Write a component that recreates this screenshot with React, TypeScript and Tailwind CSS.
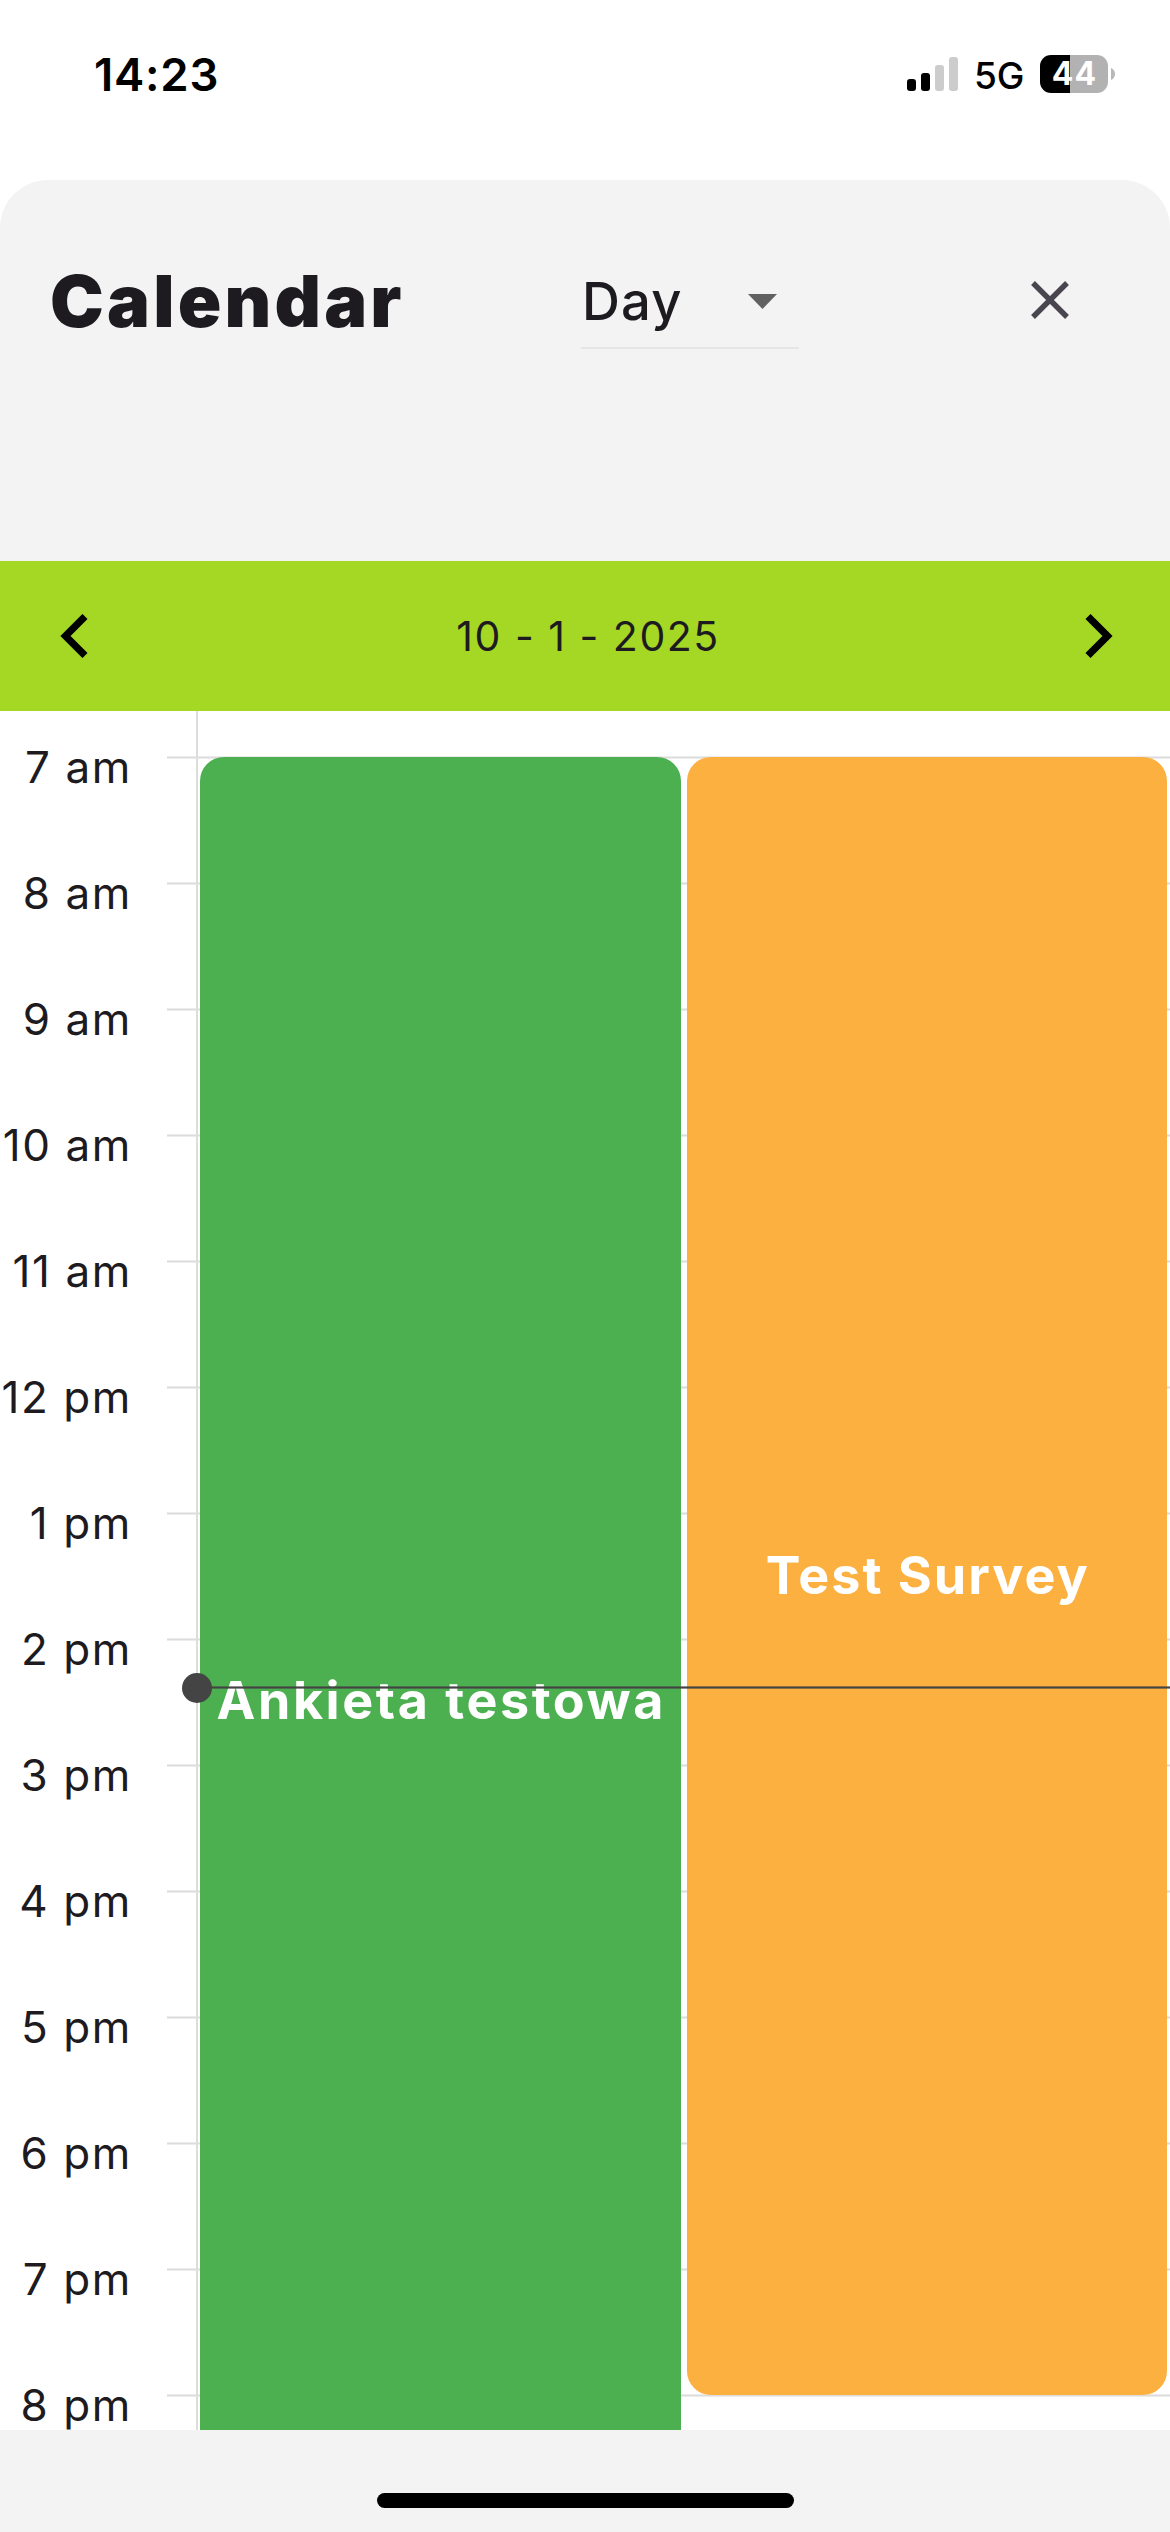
import React from "react";

const hours = [
  "7 am", "8 am", "9 am", "10 am", "11 am", "12 pm", "1 pm",
  "2 pm", "3 pm", "4 pm", "5 pm", "6 pm", "7 pm", "8 pm",
];

function StatusBar() {
  return (
    <div className="flex h-[180px] shrink-0 items-start justify-between pl-[94px] pr-[55px] text-black">
      <div className="mt-[50px] h-[49px] text-[45.5px] font-semibold leading-[49px] tracking-[0.75px]">14:23</div>
      <div className="mt-[55px] flex h-[38px] items-center">
        <div className="flex h-[34px] items-end gap-[5px]">
          <div className="h-3 w-[9px] rounded-[3px] bg-black" />
          <div className="h-[18px] w-[9px] rounded-[3px] bg-black" />
          <div className="h-[26px] w-[9px] rounded-[3px] bg-[#cccccc]" />
          <div className="h-[34px] w-[9px] rounded-[3px] bg-[#cccccc]" />
        </div>
        <div className="ml-4 mt-1 w-[66px] text-[37px] font-medium leading-[38px]">5G</div>
        <div className="flex h-[38px] w-[68px] items-center justify-center rounded-[11px] bg-[linear-gradient(to_right,#000_30px,#b2b2b2_30px)] pl-px text-[32px] font-bold leading-[38px] tracking-[1px] text-white">
          44
        </div>
        <svg className="ml-[3px]" width="4" height="12" viewBox="0 0 4 12">
          <path d="M0 0C2.4 1 4 3.3 4 6S2.4 11 0 12Z" fill="#b8b8b8" />
        </svg>
      </div>
    </div>
  );
}

function Header() {
  return (
    <header className="flex h-[381px] shrink-0 items-start rounded-t-[48px] bg-[#f3f3f3] pl-[50px] text-[#1d1b20]">
      <h1 className="mt-[81px] w-[531px] text-[72px] font-black leading-[80px] tracking-[3.2px]">Calendar</h1>
      <div className="mt-[75px] flex h-[94px] w-[218px] items-center justify-between border-b-[2px] border-[#e5e5e5] pl-px pr-[22px]">
        <span className="text-[52.5px] font-medium leading-[92px] tracking-[1.2px]">Day</span>
        <svg width="29" height="15" viewBox="0 0 29 15">
          <path d="M0 0H29L14.5 15Z" fill="#616161" />
        </svg>
      </div>
      <svg className="ml-[232px] mt-[101px]" width="38" height="38" viewBox="0 0 38 38">
        <path d="M2 2L36 36M36 2L2 36" stroke="#49454f" strokeWidth="5.4" fill="none" />
      </svg>
    </header>
  );
}

function DateBar() {
  return (
    <div className="flex h-[150px] shrink-0 items-center justify-between bg-[#a5d824] pl-[60px] pr-[57px]">
      <svg width="28" height="44" viewBox="0 0 28 44">
        <path d="M25 2.5L5.5 22L25 41.5" stroke="#000" strokeWidth="7.2" fill="none" />
      </svg>
      <div className="pl-[3px] text-[41px] leading-[50px] tracking-[1.5px] text-[#1d1b20]">10 - 1 - 2025</div>
      <svg width="28" height="44" viewBox="0 0 28 44">
        <path d="M3 2.5L22.5 22L3 41.5" stroke="#000" strokeWidth="7.2" fill="none" />
      </svg>
    </div>
  );
}

function Timeline() {
  return (
    <main className="relative h-[1719px] shrink-0 overflow-hidden bg-white pt-[45px]">
      {hours.map((h) => (
        <div key={h} className="flex h-[126px] items-start text-[#1d1b20]">
          <div className="-mt-[14px] w-[132px] shrink-0 whitespace-nowrap text-right text-[44px] leading-[50px] tracking-[1.6px]">
            {h}
          </div>
          <div className="ml-[35px] h-[3px] flex-1 border-y border-[#ececec] bg-[#dcdcdc]" />
        </div>
      ))}
      <div className="absolute bottom-0 left-[196px] top-0 w-[2px] bg-[#dddddd]" />
      <div className="absolute left-[200px] right-[3px] top-[46px] flex items-start gap-[6px] text-[52px] font-bold leading-[60px] text-white">
        <div className="flex h-[1890px] w-[480.5px] items-center justify-center rounded-[24px] bg-[#4caf50] pl-[2px]">
          <span className="-mt-[2px] whitespace-nowrap tracking-[2.57px]">Ankieta testowa</span>
        </div>
        <div className="flex h-[1638px] flex-1 items-center justify-center rounded-[24px] bg-[#fbb040] pl-[2px]">
          <span className="-mt-px whitespace-nowrap tracking-[2px]">Test Survey</span>
        </div>
      </div>
      <div className="absolute left-[197px] right-0 top-[975px] h-[3px] border-y border-[#444444]/60 bg-[#444444] bg-clip-padding" />
      <div className="absolute left-[182px] top-[962px] size-[30px] rounded-full bg-[#444444]" />
    </main>
  );
}

export default function App() {
  return (
    <div className="flex h-[2532px] w-[1170px] flex-col overflow-hidden bg-white font-['Inter',sans-serif]">
      <StatusBar />
      <Header />
      <DateBar />
      <Timeline />
      <footer className="flex h-[102px] shrink-0 justify-center bg-[#f3f3f3] pt-[63px]">
        <div className="h-[15px] w-[417px] rounded-full bg-black" />
      </footer>
    </div>
  );
}
